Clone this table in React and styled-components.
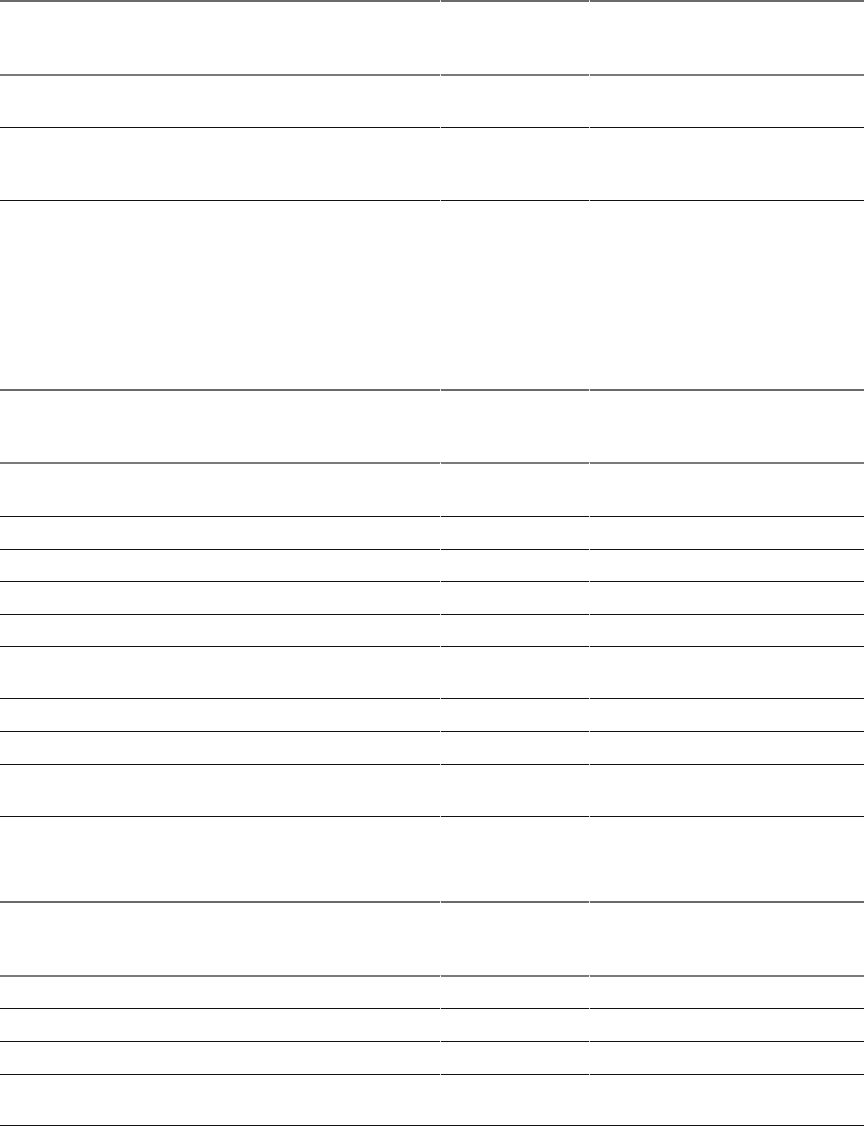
import React from 'react'
import styled, { createGlobalStyle } from 'styled-components'

const GlobalStyle = createGlobalStyle`
    html, body {
        margin: 0;
        padding: 0;
        background: #fff;
        font-family: "Liberation Sans", Arial, sans-serif;
    }
`

const Table = styled.div`
    width: 864px;
    display: flex;
    flex-direction: column;
`

const lineStyles = {
    head: '2px solid #6a6a6a',
    sub: '2px solid #7a7a7a',
    row: '1px solid #111',
}

// the 1px gap between cells shows a faint line where the borders meet
const Row = styled.div`
    display: grid;
    grid-template-columns: 440px 148px 1fr;
    column-gap: 1px;
    height: ${p => p.$h}px;
    border-bottom: ${p => (p.$last ? '1px solid #111' : 'none')};
    box-sizing: border-box;
    background-image: linear-gradient(#d4d4d4, #d4d4d4);
    background-size: 100% 1px;
    background-repeat: no-repeat;
`

const Cell = styled.div`
    border-top: ${p => lineStyles[p.$line]};
    box-sizing: border-box;
`

const rows = [
    { h: 74, line: 'head' },
    { h: 53, line: 'sub' },
    { h: 73, line: 'row' },
    { h: 189, line: 'row' },
    { h: 73, line: 'head' },
    { h: 54, line: 'sub' },
    { h: 33, line: 'row' },
    { h: 32, line: 'row' },
    { h: 33, line: 'row' },
    { h: 32, line: 'row' },
    { h: 52, line: 'row' },
    { h: 33, line: 'row' },
    { h: 33, line: 'row' },
    { h: 52, line: 'row' },
    { h: 85, line: 'row' },
    { h: 74, line: 'head' },
    { h: 33, line: 'sub' },
    { h: 33, line: 'row' },
    { h: 33, line: 'row' },
    { h: 52, line: 'row' },
]

const App = () => {
    return (
        <>
            <GlobalStyle />
            <Table>
                {rows.map((row, i) => (
                    <Row key={i} $h={row.h} $last={i === rows.length - 1}>
                        <Cell $line={row.line} />
                        <Cell $line={row.line} />
                        <Cell $line={row.line} />
                    </Row>
                ))}
            </Table>
        </>
    )
}

export default App
